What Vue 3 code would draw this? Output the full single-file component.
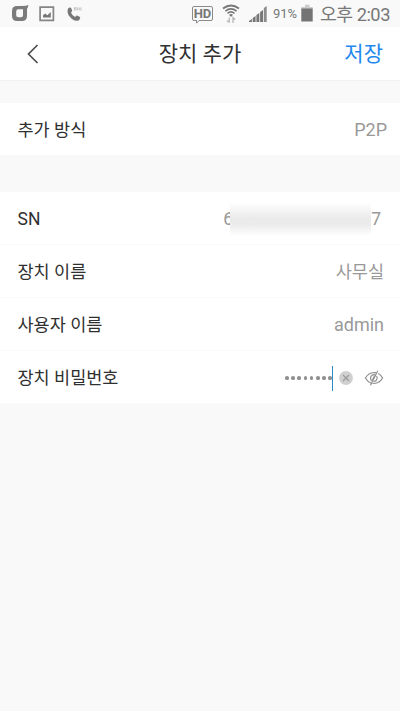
<script setup>
const dots = 8
const bars = [3, 6, 9, 12, 16]
</script>

<template>
  <div class="screen">
    <div class="status">
      <svg class="carrier" width="18" height="18" viewBox="0 0 18 18">
        <path d="M17.300 1Q15.500 2 11 2H6Q1 2 1 7V12Q1 17 6 17H11Q16 17 16 12V5Q17.300 3.800 17.300 1ZM7.500 5.300H12V11.300Q12 13.300 10 13.300H7.200Q5.200 13.300 5.200 11.300V7.500Q5.200 5.300 7.500 5.300Z" fill="#7b7b7b" fill-rule="evenodd" />
      </svg>
      <svg class="picture" width="16" height="16" viewBox="0 0 16 16">
        <path d="M1.100 1.100H14.400V14.400H1.100Z" fill="none" stroke="#858585" stroke-width="1.700" />
        <path d="M4 11.500V9.200L6.200 7.600L8.300 9.300L11.800 6V11.500Z" fill="#777" />
      </svg>
      <svg class="call" width="16" height="16" viewBox="0 0 16 16">
        <path d="M1.300 2.200Q2.500.8 4 1.800L5.200 4.500Q5.200 5.800 4 6.400Q5 9.500 8.200 10.900L9.600 9.600Q10.800 9.300 13.100 11.300Q13.600 12.500 11.700 14.400Q9 15.800 5 12.900C.8 9.900-.5 5.500 1.300 2.200Z" fill="#777" />
        <path d="M7.500 1.300V4.500M7.500 2.900L9 1.300V4.500M10.700 1.500V4.300M12.200 1.500V4.300M13.900 1.300V4.500" fill="none" stroke="#aaa" stroke-width=".7" />
      </svg>
      <span class="spacer"></span>
      <span class="hd">HD<svg width="6" height="4" viewBox="0 0 6 4"><path d="M.5 0V3L4 0" fill="#f9f9f9" stroke="#8b8b8b" /></svg></span>
      <svg class="wifi" width="20" height="22" viewBox="0 0 20 22">
        <g fill="none" stroke="#777">
          <path d="M2 6.500Q10 .5 18 6.500" stroke-width="1.900" />
          <path d="M4.400 9.100Q10 4.600 15.600 9.100" stroke-width="1.700" />
          <path d="M6.500 11.300Q10 8.500 13.500 11.300" stroke-width="1.600" />
          <path d="M8.300 15.500V20.500M5.800 18.500L8.300 20.500M12 21V15.500L14.200 17.500" stroke="#bbb" stroke-width="1.400" />
        </g>
        <path d="M8 12.800Q10 11.400 12 12.800L10 15Z" fill="#777" />
      </svg>
      <svg class="signal" width="18" height="18" viewBox="0 0 18 18">
        <path v-for="(h, i) in bars" :key="h" :d="`M${i * 3.7} 18V${20 - h}L${i * 3.7 + 2.9} ${18 - h}V18Z`" :fill="i === 4 ? '#8c8c8c' : '#777'" />
      </svg>
      <span class="percent">91%</span>
      <svg class="battery" width="12" height="18" viewBox="0 0 12 18">
        <path d="M4 .8H8.500V3H11.700V5H.3V3H4Z" fill="#ccc" />
        <path d="M.3 4.500H11.700V17.500H.3Z" fill="#747474" />
      </svg>
      <span class="clock">오후 2:03</span>
    </div>

    <header class="bar">
      <svg class="back" width="12" height="20" viewBox="0 0 12 20">
        <path d="M10.500 1L1.500 10L10.500 19" fill="none" stroke="#484848" stroke-width="1.600" />
      </svg>
      <h1>장치 추가</h1>
      <span class="save">저장</span>
    </header>

    <section class="group method">
      <div class="row"><span>추가 방식</span><span class="value p2p">P2P</span></div>
    </section>

    <section class="group details">
      <div class="row">
        <span>SN</span>
        <span class="value serial"><span>6</span><span class="mask"></span><span>7</span></span>
      </div>
      <div class="row"><span>장치 이름</span><span class="value">사무실</span></div>
      <div class="row"><span>사용자 이름</span><span class="value admin">admin</span></div>
      <div class="row">
        <span>장치 비밀번호</span>
        <span class="value password">
          <span class="dots"><i v-for="n in dots" :key="n"></i></span>
          <span class="caret"></span>
          <svg class="clear" width="14" height="14" viewBox="0 0 14 14">
            <circle cx="7" cy="7" r="6.900" fill="#d0d0d0" />
            <path d="M4 4L10 10M10 4L4 10" stroke="#999" stroke-width="1.100" />
          </svg>
          <svg class="eye" width="20" height="16" viewBox="0 0 20 16">
            <g fill="none" stroke="#8f8f8f" stroke-width="1.200">
              <path d="M7.200 13.200Q3.700 12 1.400 8Q4.500 2.800 10 2.500L12 2.700" />
              <path d="M14.300 3.500Q17 5 18.600 8Q15.500 13.200 10 13.500L8.500 13.400" />
              <path d="M7.500 11Q5.500 8 7.700 5.500Q9.200 4.200 11.200 4.800M12.700 6Q14 8.300 12.200 10.500Q11 11.600 9.500 11.400" />
              <path d="M13.800.8L6.500 15.200M10.800 5.500L8.200 10.200" />
            </g>
          </svg>
        </span>
      </div>
    </section>
  </div>
</template>

<style>
body { margin: 0; background: #f9f9f9; }
</style>

<style scoped>
.screen {
  width: 400px;
  height: 711px;
  overflow: hidden;
  background: #f9f9f9;
  font-family: Roboto, "Noto Sans CJK KR", sans-serif;
  color: #303030;
}
.status {
  height: 27px;
  display: flex;
  align-items: center;
  box-sizing: border-box;
  padding: 0 11px 0 11px;
  color: #777;
  white-space: nowrap;
}
svg { display: block; flex: none; }
.carrier { margin-top: -1px; }
.picture { margin-left: 10px; }
.call { margin-left: 12px; }
.spacer { flex: 1; }
.hd {
  box-sizing: border-box;
  width: 21px;
  height: 15px;
  border: 1px solid #8b8b8b;
  border-radius: 2px;
  font-size: 13px;
  line-height: 14px;
  font-weight: 700;
  text-align: center;
  position: relative;
  margin-right: 8px;
}
.hd svg { position: absolute; left: 3px; top: 13px; }
.wifi { margin-right: 8px; margin-top: -1px; }
.signal { margin-top: -1px; margin-right: 6px; }
.percent { width: 28px; font-size: 13px; line-height: 18px; padding-top: 1px; }
.battery { margin-right: 7px; margin-top: -1px; }
.clock { width: 69px; font-size: 18.3px; line-height: 26px; letter-spacing: -0.5px; padding-top: 2px; }
.bar {
  height: 54px;
  box-sizing: border-box;
  background: #fff;
  border-bottom: 1px solid #f3f3f3;
  display: grid;
  grid-template-columns: 70px 1fr 70px;
  align-items: center;
}
.back { margin-left: 27px; }
h1 { margin: 0; padding-top: 1px; font-size: 21px; line-height: 30px; font-weight: 400; text-align: center; }
.save { color: #1e88ee; font-size: 21px; line-height: 30px; justify-self: end; padding: 1px 17px 0 0; }
.group { background: #fff; }
.method { margin-top: 22px; }
.details { margin-top: 37px; }
.row {
  height: 53px;
  box-sizing: border-box;
  border-bottom: 1px solid #fafafa;
  padding: 2px 16px 0 17.5px;
  display: flex;
  align-items: center;
  justify-content: space-between;
  font-size: 17.5px;
  line-height: 26px;
}
.method .row { height: 52px; border: 0; padding-right: 13px; }
.value { color: #999; }
.p2p { font-size: 18px; }
.admin { font-size: 18px; }
.serial { display: flex; align-items: center; margin-right: 3px; }
.mask {
  width: 141px;
  height: 34px;
  margin-left: -3px;
  position: relative;
  background: linear-gradient(#fff, #f3f3f3 28%, #eaeaea 50%, #ececec 68%, #fff);
}
.password { display: flex; align-items: center; }
.dots { display: flex; gap: 2.5px; }
.dots i { width: 3.7px; height: 3.7px; border-radius: 50%; background: #919191; }
.caret { width: 1px; height: 25px; background: #2a8ac8; }
.clear { margin-left: 6px; }
.eye { margin-left: 11px; }
</style>
